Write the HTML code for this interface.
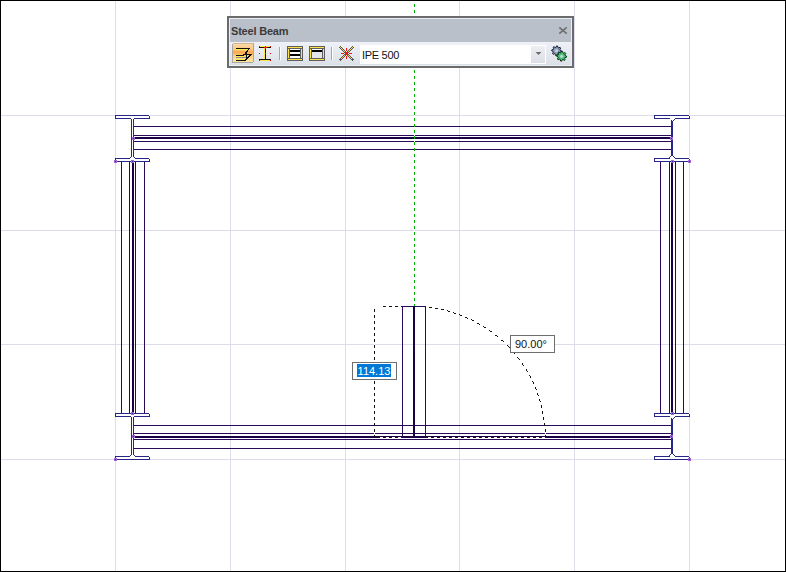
<!DOCTYPE html>
<html><head><meta charset="utf-8"><style>
html,body{margin:0;padding:0;}
body{width:786px;height:572px;position:relative;overflow:hidden;background:#fff;font-family:"Liberation Sans",sans-serif;}
#frame{position:absolute;left:0;top:0;width:784px;height:570px;border:1px solid #000;}
#title{position:absolute;left:231px;top:25px;letter-spacing:-0.2px;font-size:11px;line-height:13px;font-weight:bold;color:#3a3a3a;white-space:nowrap;}
#ipe{position:absolute;left:362px;top:49px;font-size:11px;line-height:13px;color:#111;letter-spacing:-0.3px;white-space:nowrap;}
.lbl{position:absolute;background:#fff;border:1px solid #6e6e6e;font-size:11px;}
</style></head><body>
<div id="frame"></div>
<svg width="786" height="572" viewBox="0 0 786 572" style="position:absolute;left:0;top:0" shape-rendering="crispEdges">
<path fill="#ffffff" d="M414 1h1v3h-1zM414 7h1v3h-1zM414 13h1v3h-1zM414 19h1v3h-1zM414 25h1v3h-1zM414 31h1v3h-1zM414 37h1v3h-1zM414 43h1v3h-1zM414 49h1v3h-1zM414 55h1v3h-1zM414 61h1v3h-1zM414 67h1v3h-1zM414 73h1v3h-1zM414 79h1v3h-1zM414 85h1v3h-1zM414 91h1v3h-1zM414 97h1v3h-1zM414 103h1v3h-1zM414 109h1v3h-1zM149 115h1v1h-1zM689 115h1v1h-1zM414 115h1v3h-1zM414 121h1v3h-1zM414 127h1v3h-1zM414 133h1v3h-1zM414 139h1v3h-1zM414 145h1v3h-1zM414 151h1v3h-1zM149 158h1v1h-1zM689 158h1v1h-1zM414 157h1v3h-1zM414 163h1v3h-1zM414 169h1v3h-1zM414 175h1v3h-1zM414 181h1v3h-1zM414 187h1v3h-1zM414 193h1v3h-1zM414 199h1v3h-1zM414 205h1v3h-1zM414 211h1v3h-1zM414 217h1v3h-1zM414 223h1v3h-1zM414 229h1v3h-1zM414 235h1v3h-1zM414 241h1v3h-1zM414 247h1v3h-1zM414 253h1v3h-1zM414 259h1v3h-1zM414 265h1v3h-1zM414 271h1v3h-1zM414 277h1v3h-1zM414 283h1v3h-1zM414 289h1v3h-1zM414 295h1v3h-1zM414 301h1v3h-1zM380 306h3v1h-3zM386 306h3v1h-3zM392 306h3v1h-3zM398 306h3v1h-3zM426 307h3v1h-3zM432 307h1v1h-1zM374 306h1v3h-1zM433 308h2v1h-2zM438 308h1v1h-1zM439 309h2v1h-2zM444 310h3v1h-3zM450 311h1v1h-1zM451 312h2v1h-2zM456 313h1v1h-1zM374 312h1v3h-1zM457 314h2v1h-2zM462 315h1v1h-1zM463 316h2v1h-2zM468 318h2v1h-2zM470 319h1v1h-1zM374 318h1v3h-1zM474 321h2v1h-2zM476 322h1v1h-1zM480 324h1v1h-1zM481 325h2v1h-2zM374 324h1v3h-1zM486 328h1v1h-1zM487 329h2v1h-2zM374 330h1v3h-1zM492 332h1v1h-1zM493 333h1v1h-1zM494 334h1v1h-1zM498 337h1v1h-1zM374 336h1v3h-1zM499 338h1v1h-1zM500 339h1v1h-1zM504 342h1v1h-1zM505 343h1v1h-1zM374 342h1v3h-1zM506 344h1v1h-1zM510 348h1v1h-1zM374 348h1v3h-1zM511 349h1v2h-1zM515 354h1v1h-1zM374 354h1v3h-1zM516 355h1v2h-1zM520 360h1v2h-1zM374 360h1v3h-1zM521 362h1v1h-1zM524 366h1v2h-1zM374 366h1v3h-1zM525 368h1v1h-1zM527 372h1v1h-1zM374 372h1v3h-1zM528 373h1v2h-1zM531 378h1v2h-1zM374 378h1v3h-1zM532 380h1v1h-1zM533 384h1v1h-1zM374 384h1v3h-1zM534 385h1v2h-1zM536 390h1v2h-1zM374 390h1v3h-1zM537 392h1v1h-1zM538 396h1v2h-1zM374 396h1v3h-1zM539 398h1v1h-1zM374 402h1v3h-1zM540 402h1v3h-1zM541 408h1v1h-1zM374 408h1v3h-1zM542 409h1v2h-1zM149 413h1v1h-1zM689 413h1v1h-1zM374 414h1v3h-1zM543 414h1v3h-1zM374 420h1v3h-1zM544 420h1v3h-1zM374 426h1v3h-1zM544 426h1v3h-1zM374 432h1v3h-1zM545 432h1v3h-1zM380 437h3v1h-3zM386 437h3v1h-3zM392 437h3v1h-3zM398 437h3v1h-3zM428 437h3v1h-3zM434 437h3v1h-3zM440 437h3v1h-3zM446 437h3v1h-3zM452 437h3v1h-3zM458 437h3v1h-3zM464 437h3v1h-3zM470 437h3v1h-3zM476 437h3v1h-3zM482 437h3v1h-3zM488 437h3v1h-3zM494 437h3v1h-3zM500 437h3v1h-3zM506 437h3v1h-3zM512 437h3v1h-3zM518 437h3v1h-3zM524 437h3v1h-3zM530 437h3v1h-3zM536 437h3v1h-3zM542 437h3v1h-3zM149 456h1v1h-1zM689 456h1v1h-1z"/>
<path fill="#00b400" d="M414 4h1v3h-1zM414 10h1v3h-1zM414 16h1v3h-1zM414 22h1v3h-1zM414 28h1v3h-1zM414 34h1v3h-1zM414 40h1v3h-1zM414 46h1v3h-1zM414 52h1v3h-1zM414 58h1v3h-1zM414 64h1v3h-1zM414 70h1v3h-1zM414 76h1v3h-1zM414 82h1v3h-1zM414 88h1v3h-1zM414 94h1v3h-1zM414 100h1v3h-1zM414 106h1v3h-1zM414 112h1v3h-1zM414 118h1v3h-1zM414 124h1v3h-1zM414 130h1v3h-1zM414 136h1v3h-1zM414 142h1v3h-1zM414 148h1v3h-1zM414 154h1v3h-1zM414 160h1v3h-1zM414 166h1v3h-1zM414 172h1v3h-1zM414 178h1v3h-1zM414 184h1v3h-1zM414 190h1v3h-1zM414 196h1v3h-1zM414 202h1v3h-1zM414 208h1v3h-1zM414 214h1v3h-1zM414 220h1v3h-1zM414 226h1v3h-1zM414 232h1v3h-1zM414 238h1v3h-1zM414 244h1v3h-1zM414 250h1v3h-1zM414 256h1v3h-1zM414 262h1v3h-1zM414 268h1v3h-1zM414 274h1v3h-1zM414 280h1v3h-1zM414 286h1v3h-1zM414 292h1v3h-1zM414 298h1v3h-1zM414 304h1v2h-1z"/>
<path fill="#dcdcea" d="M115 1h1v114h-1zM230 1h1v114h-1zM345 1h1v114h-1zM459 1h1v114h-1zM574 1h1v114h-1zM689 1h1v114h-1zM1 115h114v1h-114zM150 115h264v1h-264zM415 115h239v1h-239zM690 115h95v1h-95zM230 116h1v10h-1zM345 116h1v10h-1zM459 116h1v10h-1zM574 116h1v10h-1zM230 127h1v8h-1zM345 127h1v8h-1zM459 127h1v8h-1zM574 127h1v8h-1zM230 136h1v1h-1zM345 136h1v1h-1zM459 136h1v1h-1zM574 136h1v1h-1zM230 139h1v2h-1zM345 139h1v2h-1zM459 139h1v2h-1zM574 139h1v2h-1zM230 142h1v7h-1zM345 142h1v7h-1zM459 142h1v7h-1zM574 142h1v7h-1zM115 119h1v39h-1zM689 119h1v39h-1zM230 150h1v80h-1zM345 150h1v80h-1zM459 150h1v80h-1zM574 150h1v80h-1zM115 163h1v67h-1zM689 163h1v67h-1zM1 230h120v1h-120zM122 230h7v1h-7zM130 230h2v1h-2zM134 230h1v1h-1zM136 230h8v1h-8zM145 230h269v1h-269zM415 230h245v1h-245zM661 230h8v1h-8zM670 230h1v1h-1zM673 230h2v1h-2zM676 230h7v1h-7zM684 230h101v1h-101zM459 231h1v83h-1zM115 231h1v113h-1zM230 231h1v113h-1zM345 231h1v113h-1zM574 231h1v113h-1zM689 231h1v113h-1zM459 315h1v29h-1zM1 344h120v1h-120zM122 344h7v1h-7zM130 344h2v1h-2zM134 344h1v1h-1zM136 344h8v1h-8zM145 344h229v1h-229zM375 344h27v1h-27zM403 344h10v1h-10zM415 344h10v1h-10zM426 344h80v1h-80zM507 344h153v1h-153zM661 344h8v1h-8zM670 344h1v1h-1zM673 344h2v1h-2zM676 344h7v1h-7zM684 344h101v1h-101zM115 345h1v68h-1zM689 345h1v68h-1zM230 345h1v80h-1zM345 345h1v80h-1zM459 345h1v80h-1zM574 345h1v80h-1zM230 426h1v7h-1zM345 426h1v7h-1zM459 426h1v7h-1zM574 426h1v7h-1zM230 434h1v2h-1zM345 434h1v2h-1zM459 434h1v2h-1zM574 434h1v2h-1zM230 438h1v1h-1zM345 438h1v1h-1zM459 438h1v1h-1zM574 438h1v1h-1zM230 440h1v8h-1zM345 440h1v8h-1zM459 440h1v8h-1zM574 440h1v8h-1zM115 417h1v39h-1zM689 417h1v39h-1zM230 449h1v10h-1zM345 449h1v10h-1zM459 449h1v10h-1zM574 449h1v10h-1zM1 459h113v1h-113zM150 459h504v1h-504zM691 459h94v1h-94zM230 460h1v111h-1zM345 460h1v111h-1zM459 460h1v111h-1zM574 460h1v111h-1zM115 461h1v110h-1zM689 461h1v110h-1z"/>
<path fill="#26268a" d="M115 115h34v1h-34zM654 115h35v1h-35zM115 116h1v2h-1zM149 116h1v2h-1zM654 116h1v2h-1zM689 116h1v2h-1zM115 118h16v1h-16zM134 118h16v1h-16zM654 118h16v1h-16zM675 118h15v1h-15zM674 119h1v1h-1zM671 120h1v1h-1zM673 120h1v1h-1zM133 119h1v18h-1zM671 121h2v16h-2zM671 140h2v16h-2zM131 119h1v38h-1zM133 140h1v17h-1zM670 156h1v1h-1zM673 156h1v1h-1zM130 157h1v1h-1zM134 157h1v1h-1zM669 157h1v1h-1zM674 157h1v1h-1zM115 158h15v1h-15zM135 158h14v1h-14zM654 158h16v1h-16zM675 158h14v1h-14zM115 159h1v1h-1zM689 159h1v1h-1zM149 159h1v2h-1zM654 159h1v2h-1zM117 161h14v1h-14zM134 161h16v1h-16zM654 161h17v1h-17zM674 161h14v1h-14zM115 413h16v1h-16zM134 413h15v1h-15zM654 413h17v1h-17zM674 413h15v1h-15zM115 414h1v2h-1zM149 414h1v2h-1zM654 414h1v2h-1zM689 414h1v2h-1zM115 416h16v1h-16zM134 416h16v1h-16zM654 416h16v1h-16zM675 416h15v1h-15zM674 417h1v1h-1zM671 418h1v1h-1zM673 418h1v1h-1zM133 417h1v18h-1zM671 419h2v16h-2zM671 438h2v16h-2zM131 417h1v38h-1zM133 438h1v17h-1zM670 454h1v1h-1zM673 454h1v1h-1zM130 455h1v1h-1zM134 455h1v1h-1zM669 455h1v1h-1zM674 455h1v1h-1zM115 456h15v1h-15zM135 456h14v1h-14zM654 456h16v1h-16zM675 456h14v1h-14zM115 457h1v1h-1zM689 457h1v1h-1zM149 457h1v2h-1zM654 457h1v2h-1zM117 459h33v1h-33zM654 459h34v1h-34z"/>
<path fill="#2a0a58" d="M134 126h280v1h-280zM415 126h256v1h-256zM134 135h280v1h-280zM415 135h256v1h-256zM134 141h280v1h-280zM415 141h256v1h-256zM134 149h280v1h-280zM415 149h256v1h-256zM402 306h11v1h-11zM415 306h11v1h-11zM121 162h1v251h-1zM129 162h1v251h-1zM135 162h1v251h-1zM144 162h1v251h-1zM660 162h1v251h-1zM669 162h1v251h-1zM675 162h1v251h-1zM683 162h1v251h-1zM402 307h1v118h-1zM425 307h1v118h-1zM134 425h240v1h-240zM375 425h38v1h-38zM415 425h129v1h-129zM545 425h126v1h-126zM402 426h1v7h-1zM425 426h1v7h-1zM134 433h240v1h-240zM375 433h38v1h-38zM415 433h130v1h-130zM546 433h125v1h-125zM402 434h1v3h-1zM425 434h1v3h-1zM134 439h537v1h-537zM134 448h537v1h-537z"/>
<path fill="#a064d4" d="M132 137h3v1h-3zM670 137h3v1h-3zM132 138h1v1h-1zM134 138h1v1h-1zM670 138h1v1h-1zM672 138h1v1h-1zM132 139h3v1h-3zM670 139h3v1h-3zM114 160h3v1h-3zM131 160h3v1h-3zM671 160h3v1h-3zM688 160h3v1h-3zM114 161h1v1h-1zM116 161h1v1h-1zM131 161h1v1h-1zM133 161h1v1h-1zM671 161h1v1h-1zM673 161h1v1h-1zM688 161h1v1h-1zM690 161h1v1h-1zM114 162h3v1h-3zM131 162h3v1h-3zM671 162h3v1h-3zM688 162h3v1h-3zM131 412h3v1h-3zM671 412h3v1h-3zM131 413h1v1h-1zM133 413h1v1h-1zM671 413h1v1h-1zM673 413h1v1h-1zM131 414h3v1h-3zM671 414h3v1h-3zM132 435h3v1h-3zM670 435h3v1h-3zM132 436h1v1h-1zM134 436h1v1h-1zM670 436h1v1h-1zM672 436h1v1h-1zM132 437h3v1h-3zM670 437h3v1h-3zM114 458h3v1h-3zM688 458h3v1h-3zM114 459h1v1h-1zM116 459h1v1h-1zM688 459h1v1h-1zM690 459h1v1h-1zM114 460h3v1h-3zM688 460h3v1h-3z"/>
<path fill="#1a0046" d="M135 137h279v2h-279zM415 137h255v2h-255zM132 163h2v249h-2zM671 163h2v249h-2zM413 306h2v130h-2zM375 436h27v1h-27zM403 436h22v1h-22zM426 436h119v1h-119zM135 436h239v2h-239zM546 436h124v2h-124zM375 437h2v1h-2zM402 437h24v1h-24z"/>
<path fill="#3a2a8a" d="M133 138h1v1h-1zM671 138h1v1h-1zM115 161h1v1h-1zM132 161h1v1h-1zM672 161h1v1h-1zM689 161h1v1h-1zM132 413h1v1h-1zM672 413h1v1h-1zM133 436h1v1h-1zM671 436h1v1h-1zM115 459h1v1h-1zM689 459h1v1h-1z"/>
<path fill="#111111" d="M383 306h3v1h-3zM389 306h3v1h-3zM395 306h3v1h-3zM401 306h1v1h-1zM429 307h3v1h-3zM435 308h3v1h-3zM441 309h3v1h-3zM447 310h1v1h-1zM374 309h1v3h-1zM448 311h2v1h-2zM453 312h1v1h-1zM454 313h2v1h-2zM459 314h1v1h-1zM460 315h2v1h-2zM374 315h1v3h-1zM465 317h2v1h-2zM467 318h1v1h-1zM471 319h1v1h-1zM472 320h2v1h-2zM374 321h1v3h-1zM477 323h2v1h-2zM479 324h1v1h-1zM483 326h1v1h-1zM484 327h2v1h-2zM374 327h1v3h-1zM489 330h1v1h-1zM490 331h2v1h-2zM374 333h1v3h-1zM495 335h2v1h-2zM497 336h1v1h-1zM501 340h2v1h-2zM374 339h1v3h-1zM503 341h1v1h-1zM507 345h1v1h-1zM508 346h1v1h-1zM374 345h1v3h-1zM509 347h1v1h-1zM512 351h1v1h-1zM513 352h1v1h-1zM374 351h1v3h-1zM514 353h1v1h-1zM517 357h1v1h-1zM518 358h1v1h-1zM374 357h1v3h-1zM519 359h1v1h-1zM522 363h1v2h-1zM374 363h1v3h-1zM523 365h1v1h-1zM526 369h1v2h-1zM374 369h1v3h-1zM527 371h1v1h-1zM529 375h1v1h-1zM374 375h1v3h-1zM530 376h1v2h-1zM532 381h1v1h-1zM374 381h1v3h-1zM533 382h1v2h-1zM535 387h1v2h-1zM374 387h1v3h-1zM536 389h1v1h-1zM537 393h1v2h-1zM374 393h1v3h-1zM538 395h1v1h-1zM539 399h1v2h-1zM374 399h1v3h-1zM540 401h1v1h-1zM374 405h1v3h-1zM541 405h1v3h-1zM374 411h1v3h-1zM542 411h1v3h-1zM374 417h1v3h-1zM543 417h1v3h-1zM374 423h1v3h-1zM544 423h1v3h-1zM374 429h1v3h-1zM545 429h1v3h-1zM374 435h1v3h-1zM545 435h1v3h-1zM377 437h3v1h-3zM383 437h3v1h-3zM389 437h3v1h-3zM395 437h3v1h-3zM401 437h1v1h-1zM426 437h2v1h-2zM431 437h3v1h-3zM437 437h3v1h-3zM443 437h3v1h-3zM449 437h3v1h-3zM455 437h3v1h-3zM461 437h3v1h-3zM467 437h3v1h-3zM473 437h3v1h-3zM479 437h3v1h-3zM485 437h3v1h-3zM491 437h3v1h-3zM497 437h3v1h-3zM503 437h3v1h-3zM509 437h3v1h-3zM515 437h3v1h-3zM521 437h3v1h-3zM527 437h3v1h-3zM533 437h3v1h-3zM539 437h3v1h-3z"/>
</svg>
<div class="lbl" style="left:352px;top:362px;width:43px;height:16px;"><span style="position:absolute;left:4px;top:1px;background:#0078d7;color:#fff;width:34px;height:13px;line-height:15px;text-align:center;">114.13</span></div>
<div class="lbl" style="left:510px;top:335px;width:43px;height:16px;"><span style="position:absolute;left:4px;top:2px;color:#111;">90.00°</span></div>
<svg width="786" height="572" viewBox="0 0 786 572" style="position:absolute;left:0;top:0" shape-rendering="crispEdges">
<defs>
<linearGradient id="rowg" x1="0" y1="0" x2="0" y2="1"><stop offset="0" stop-color="#eef1f7"/><stop offset="1" stop-color="#dce0e7"/></linearGradient>
<linearGradient id="btng" x1="0" y1="0" x2="0" y2="1"><stop offset="0" stop-color="#fcdcb0"/><stop offset="0.35" stop-color="#fbc27a"/><stop offset="0.45" stop-color="#f9a848"/><stop offset="0.7" stop-color="#fcd58a"/><stop offset="1" stop-color="#fde8a4"/></linearGradient>
<linearGradient id="ddg" x1="0" y1="0" x2="0" y2="1"><stop offset="0" stop-color="#eceef2"/><stop offset="1" stop-color="#dcdfe5"/></linearGradient>
</defs>
<rect x="227" y="16" width="347" height="52" fill="#6b6b6b"/><rect x="229" y="18" width="343" height="48" fill="#eaeef5"/><rect x="230" y="19" width="341" height="23" fill="#bac0c9"/><rect x="230" y="42" width="341" height="23" fill="url(#rowg)"/><rect x="232.5" y="43.5" width="21" height="19" rx="1.5" fill="url(#btng)" stroke="#a9a79f" stroke-width="1"/><rect x="233" y="43" width="20" height="1" fill="#d4b38c"/><rect x="236" y="49" width="12" height="1" fill="#fff04a"/><rect x="236" y="56" width="8" height="1" fill="#fff04a"/><rect x="236" y="59" width="10" height="1" fill="#fff04a"/><rect x="236" y="48" width="14" height="1" fill="#111"/><rect x="236" y="55" width="8" height="1" fill="#111"/><rect x="243" y="54" width="9" height="1" fill="#111"/><rect x="236" y="57" width="10" height="1" fill="#8a8c90"/><rect x="236" y="60" width="10" height="1" fill="#111"/><path d="M249.5 48.5 L243.5 55.5 M251 54.5 L245 60.5 M246.5 52.5 L246.5 58" stroke="#111" stroke-width="1" fill="none"/><rect x="259" y="46" width="12" height="1" fill="#ffe84a"/><rect x="259" y="47" width="12" height="1" fill="#111"/><rect x="264" y="48" width="1" height="11" fill="#ffe84a"/><rect x="265" y="48" width="1" height="11" fill="#111"/><rect x="259" y="59" width="12" height="1" fill="#111"/><rect x="259" y="60" width="12" height="1" fill="#ffe84a"/><rect x="259" y="46" width="1" height="1" fill="#ff0000"/><rect x="270" y="46" width="1" height="1" fill="#ff0000"/><rect x="259" y="60" width="1" height="1" fill="#ff0000"/><rect x="270" y="60" width="1" height="1" fill="#ff0000"/><rect x="259" y="53" width="1" height="1" fill="#ff0000"/><rect x="265" y="53" width="1" height="1" fill="#ff0000"/><rect x="270" y="53" width="1" height="1" fill="#ff0000"/><rect x="265" y="47" width="1" height="1" fill="#ff0000"/><rect x="264" y="47" width="3" height="1" fill="#ff0000"/><rect x="265" y="46" width="1" height="3" fill="#ff0000"/><rect x="279" y="47" width="1" height="13" fill="#a3a7ae"/><rect x="280" y="47" width="1" height="13" fill="#ffffff"/><rect x="331" y="47" width="1" height="13" fill="#a3a7ae"/><rect x="332" y="47" width="1" height="13" fill="#ffffff"/><rect x="287" y="46" width="16" height="15" fill="#5e5e5e"/><rect x="288" y="47" width="14" height="1" fill="#ffe34a"/><rect x="288" y="59" width="14" height="1" fill="#ffe34a"/><rect x="288" y="49" width="1" height="9" fill="#ffe34a"/><rect x="301" y="49" width="1" height="9" fill="#ffe34a"/><rect x="290" y="49" width="10" height="9" fill="#ffffff"/><rect x="290" y="50" width="10" height="2" fill="#000"/><rect x="290" y="54" width="10" height="2" fill="#000"/><rect x="309" y="46" width="16" height="15" fill="#5e5e5e"/><rect x="310" y="47" width="14" height="1" fill="#ffe34a"/><rect x="310" y="59" width="14" height="1" fill="#ffe34a"/><rect x="310" y="49" width="1" height="9" fill="#ffe34a"/><rect x="323" y="49" width="1" height="9" fill="#ffe34a"/><rect x="312" y="49" width="10" height="9" fill="#e4e5ea"/><rect x="312" y="49" width="10" height="1" fill="#ffffff"/><rect x="312" y="50" width="10" height="2" fill="#000"/><path d="M340.5 47.5 L352.5 59.5 M352.5 47.5 L340.5 59.5" stroke="#55575c" stroke-width="2.6" fill="none" stroke-linecap="square"/><path d="M340.5 47.5 L352.5 59.5 M352.5 47.5 L340.5 59.5" stroke="#f3d54a" stroke-width="1.2" fill="none"/><rect x="346" y="48" width="1" height="3" fill="#ff1010"/><rect x="346" y="56" width="1" height="3" fill="#ff1010"/><rect x="341" y="53" width="3" height="1" fill="#ff1010"/><rect x="349" y="53" width="3" height="1" fill="#ff1010"/><rect x="345" y="52" width="3" height="3" fill="#ff1010"/><rect x="360" y="45" width="186" height="19" fill="#ffffff"/><rect x="531" y="46" width="14" height="17" fill="url(#ddg)"/><path d="M535.5 52 L541.5 52 L538.5 55 Z" fill="#6d6d6d" shape-rendering="auto"/><g shape-rendering="auto"><polygon points="561.50,50.80 561.41,51.76 559.86,52.15 559.53,52.76 560.06,54.26 559.32,54.87 557.95,54.06 557.29,54.26 556.60,55.70 555.64,55.61 555.25,54.06 554.64,53.73 553.14,54.26 552.53,53.52 553.34,52.15 553.14,51.49 551.70,50.80 551.79,49.84 553.34,49.45 553.67,48.84 553.14,47.34 553.88,46.73 555.25,47.54 555.91,47.34 556.60,45.90 557.56,45.99 557.95,47.54 558.56,47.87 560.06,47.34 560.67,48.08 559.86,49.45 560.06,50.11" fill="#8d9db8" stroke="#141838" stroke-width="1"/><circle cx="556.6" cy="50.8" r="1.47" fill="#c8d4e0"/><polygon points="566.60,56.20 566.50,57.18 564.93,57.58 564.59,58.20 565.14,59.74 564.38,60.36 562.98,59.53 562.30,59.73 561.60,61.20 560.62,61.10 560.22,59.53 559.60,59.19 558.06,59.74 557.44,58.98 558.27,57.58 558.07,56.90 556.60,56.20 556.70,55.22 558.27,54.82 558.61,54.20 558.06,52.66 558.82,52.04 560.22,52.87 560.90,52.67 561.60,51.20 562.58,51.30 562.98,52.87 563.60,53.21 565.14,52.66 565.76,53.42 564.93,54.82 565.13,55.50" fill="#44c474" stroke="#0a2e14" stroke-width="1"/><circle cx="561.6" cy="56.2" r="1.50" fill="#c8d4e0"/></g><path d="M559.3 27.3 L566.7 33.7 M566.7 27.3 L559.3 33.7" stroke="#6e6e6e" stroke-width="1.6" fill="none" shape-rendering="auto"/>
</svg><div id="title">Steel Beam</div><div id="ipe">IPE 500</div>
</body></html>
